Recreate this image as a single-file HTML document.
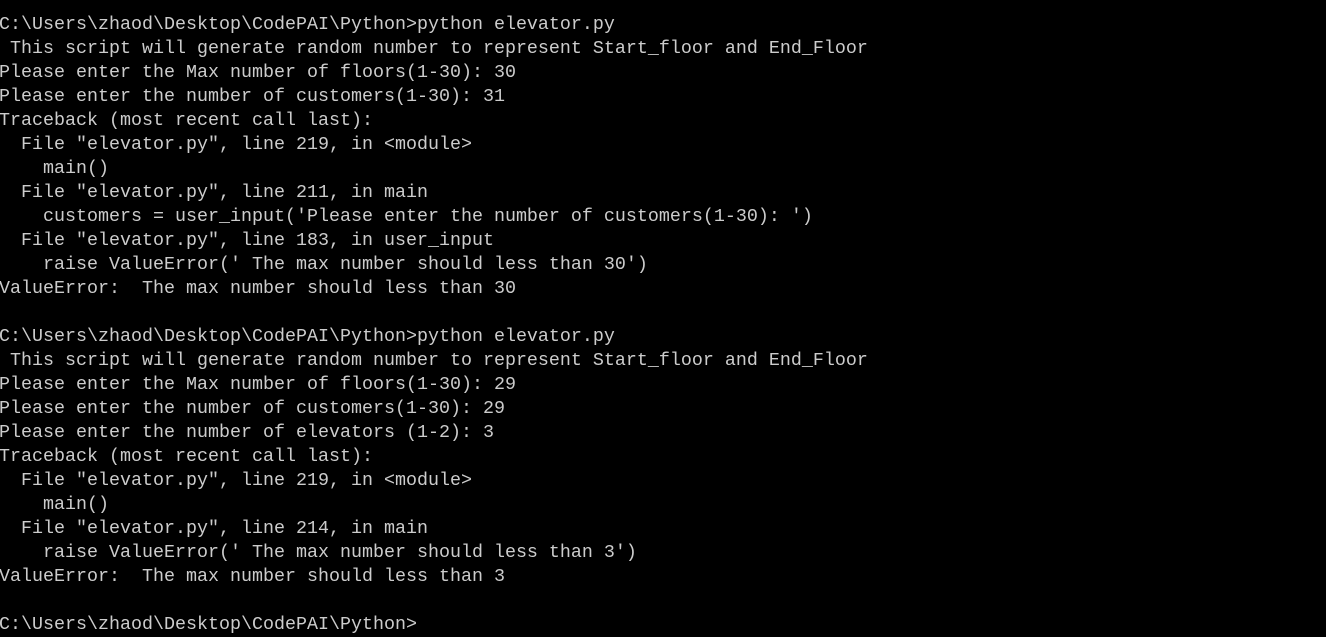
<!DOCTYPE html>
<html><head><meta charset="utf-8"><style>
html,body{margin:0;padding:0;background:#000;width:1326px;height:634px;overflow:hidden}
pre{margin:0;position:absolute;left:-1px;top:13px;font-family:"Liberation Mono",monospace;font-size:18.33px;line-height:24px;color:#cccccc;white-space:pre}
</style></head><body><pre>C:\Users\zhaod\Desktop\CodePAI\Python>python elevator.py
 This script will generate random number to represent Start_floor and End_Floor
Please enter the Max number of floors(1-30): 30
Please enter the number of customers(1-30): 31
Traceback (most recent call last):
  File "elevator.py", line 219, in &lt;module&gt;
    main()
  File "elevator.py", line 211, in main
    customers = user_input('Please enter the number of customers(1-30): ')
  File "elevator.py", line 183, in user_input
    raise ValueError(' The max number should less than 30')
ValueError:  The max number should less than 30

C:\Users\zhaod\Desktop\CodePAI\Python>python elevator.py
 This script will generate random number to represent Start_floor and End_Floor
Please enter the Max number of floors(1-30): 29
Please enter the number of customers(1-30): 29
Please enter the number of elevators (1-2): 3
Traceback (most recent call last):
  File "elevator.py", line 219, in &lt;module&gt;
    main()
  File "elevator.py", line 214, in main
    raise ValueError(' The max number should less than 3')
ValueError:  The max number should less than 3

C:\Users\zhaod\Desktop\CodePAI\Python></pre></body></html>
